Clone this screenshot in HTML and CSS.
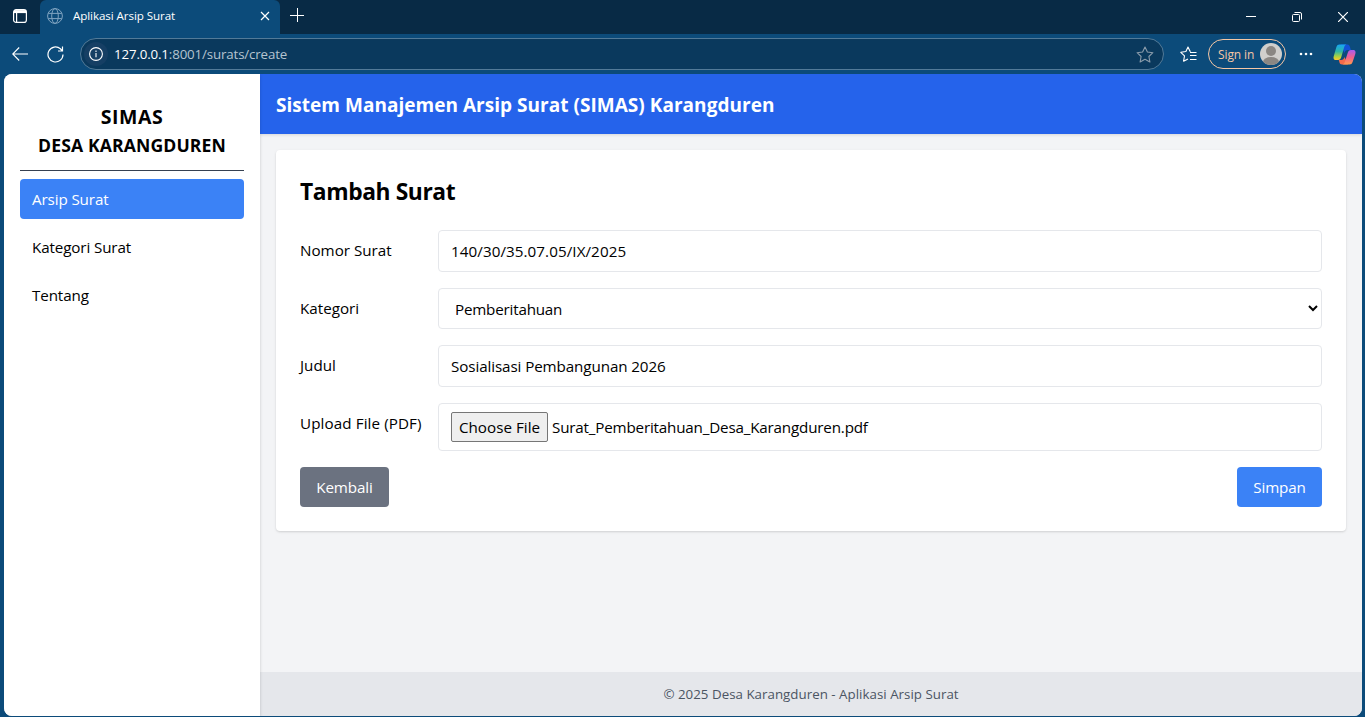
FILE: index.html
```html
<!DOCTYPE html>
<html lang="id">
<head>
<meta charset="utf-8">
<title>Aplikasi Arsip Surat</title>
<link rel="stylesheet" href="styles.css">
</head>
<body>
<div class="browser">
  <div class="tabstrip">
    <div class="tab-menu">
      <svg width="16" height="16" viewBox="0 0 16 16" fill="none" stroke="#fff" stroke-width="1.2"><rect x="1.6" y="1.6" width="12.8" height="12.8" rx="2.5"/><path d="M2 3.6h12" stroke-width="3"/><path d="M4.6 4v10"/></svg>
    </div>
    <div class="tab">
      <svg class="globe" width="16" height="16" viewBox="0 0 16 16" fill="none" stroke="#7fa3c0" stroke-width="1"><circle cx="8" cy="8" r="7.4"/><ellipse cx="8" cy="8" rx="3.3" ry="7.4"/><path d="M1.2 5.4h13.6M1.2 10.6h13.6"/></svg>
      <span class="tab-title">Aplikasi Arsip Surat</span>
      <svg class="tab-close" width="10" height="10" viewBox="0 0 10 10" stroke="#fff" stroke-width="1.2"><path d="M1 1l8 8M9 1l-8 8"/></svg>
    </div>
    <svg class="new-tab" width="14" height="14" viewBox="0 0 14 14" stroke="#fff" stroke-width="1"><path d="M7.5 0v14M0 7.5h14"/></svg>
    <div class="window-controls">
      <svg width="10" height="10" viewBox="0 0 10 10" stroke="#fff"><path d="M0 4.5h10"/></svg>
      <svg width="10" height="10" viewBox="0 0 10 10" fill="none" stroke="#fff"><rect x=".5" y="2.5" width="7" height="7" rx="1"/><path d="M2.5.5H8A1.5 1.5 0 0 1 9.5 2v5.5"/></svg>
      <svg width="10" height="10" viewBox="0 0 10 10" stroke="#fff" stroke-width="1.2"><path d="M0 0l10 10M10 0L0 10"/></svg>
    </div>
  </div>
  <div class="toolbar">
    <svg class="back" width="16" height="14" viewBox="0 0 16 14" fill="none" stroke="#fff" stroke-width="1.1"><path d="M16 7H.8M7.2.5L.7 7l6.5 6.5"/></svg>
    <svg class="reload" width="17" height="17" viewBox="0 0 17 17" fill="none" stroke="#fff" stroke-width="1.2"><path d="M16 8.5a7.500 7.500 0 1 1-2.600-5.700L15.500 5M15.500.5V5H11"/></svg>
    <div class="address">
      <div class="site-info"><svg width="14" height="14" viewBox="0 0 14 14" fill="none" stroke="#fff" stroke-width="1.1"><circle cx="7" cy="7" r="6.4"/><path d="M7 6v4.2M7 3.6v1.3"/></svg></div>
      <span class="url"><b>127.0.0.1</b>:8001/surats/create</span>
      <svg class="star" width="18" height="17" viewBox="0 0 18 17" fill="none" stroke="#8b9cab" stroke-width="1.1" stroke-linejoin="round"><path d="M9 1l2.4 5 5.500.7-4 3.800 1 5.500L9 13.300 4.100 16l1-5.500-4-3.800L6.600 6z"/></svg>
    </div>
    <svg class="favorites" width="17" height="17" viewBox="0 0 17 17" fill="none" stroke="#fff" stroke-width="1.1" stroke-linejoin="round"><path d="M10.800 5.200L10 5.200 8 1 5.900 5.500.8 6.300l3.700 3.600-.9 5.300L8 12.900M10 6.500h6.500M10 9.500h6.500M10 13.500h6.500"/></svg>
    <div class="sign-in">
      <span>Sign in</span>
      <svg width="22" height="22" viewBox="0 0 22 22"><defs><clipPath id="face"><circle cx="11" cy="11" r="11"/></clipPath></defs><g clip-path="url(#face)"><rect width="22" height="22" fill="#d1cfcc"/><circle cx="11" cy="8" r="5" fill="#8b8783"/><ellipse cx="11" cy="19" rx="8" ry="5" fill="#8b8783"/></g></svg>
    </div>
    <svg class="more" width="14" height="4" viewBox="0 0 14 4" fill="#fff"><circle cx="2" cy="2" r="1.300"/><circle cx="7" cy="2" r="1.300"/><circle cx="12" cy="2" r="1.300"/></svg>
    <svg class="copilot" width="23" height="21" viewBox="0 0 23 21">
      <defs>
        <linearGradient id="cool" x1="0" y1="0" x2="0" y2="1"><stop offset="0" stop-color="#16a4f5"/><stop offset=".45" stop-color="#2fb6a4"/><stop offset=".8" stop-color="#b4d33a"/><stop offset="1" stop-color="#ffc52e"/></linearGradient>
        <linearGradient id="warm" x1="0" y1="0" x2="0" y2="1"><stop offset="0" stop-color="#a75cf0"/><stop offset=".5" stop-color="#f0608e"/><stop offset="1" stop-color="#ff9a4c"/></linearGradient>
      </defs>
      <path d="M8 .5h6.500c1.500 0 2 1 2.400 2.300l1 3.200h-3c-2 0-3 1-3.500 3z" fill="#1251d6"/>
      <path d="M15 20.500H9c-1.500 0-2.200-1-2.600-2.300L5.800 16H8c2 0 3-1 3.500-3z" fill="#f26a4b"/>
      <path d="M6.500.5h7c-1.500.4-2 1.500-2.500 3.300L8.300 13c-.5 1.900-1.500 3-3.300 3H3C.5 16 .2 14 .8 12L3.400 3C4 1.300 4.900.5 6.500.5z" fill="url(#cool)"/>
      <path d="M16.500 20.500h-7c1.500-.4 2-1.500 2.500-3.300L14.700 9c.5-1.900 1.500-3 3.300-3h2c2.500 0 2.900 2 2.300 4l-2.700 8c-.6 1.700-1.500 2.500-3.100 2.500z" fill="url(#warm)"/>
    </svg>
  </div>
  <div class="page">
    <aside class="sidebar">
      <div class="brand"><div class="brand-name">SIMAS</div><div class="brand-village">DESA KARANGDUREN</div></div>
      <nav class="menu">
        <a class="menu-item active">Arsip Surat</a>
        <a class="menu-item">Kategori Surat</a>
        <a class="menu-item">Tentang</a>
      </nav>
    </aside>
    <div class="content">
      <header class="topbar"><span>Sistem Manajemen Arsip Surat (SIMAS) Karangduren</span></header>
      <main class="main">
        <form class="card">
          <h1 class="title">Tambah Surat</h1>
          <div class="row"><label class="label">Nomor Surat</label><input class="field number" type="text" value="140/30/35.07.05/IX/2025"></div>
          <div class="row"><label class="label">Kategori</label><select class="field select"><option>Pemberitahuan</option></select></div>
          <div class="row"><label class="label">Judul</label><input class="field" type="text" value="Sosialisasi Pembangunan 2026"></div>
          <div class="row"><label class="label upload">Upload File (PDF)</label><div class="field file"><button type="button" class="choose">Choose File</button><span class="filename">Surat_Pemberitahuan_Desa_Karangduren.pdf</span></div></div>
          <div class="actions"><a class="btn back-btn">Kembali</a><button type="button" class="btn save-btn">Simpan</button></div>
        </form>
      </main>
      <footer class="footer"><span>© 2025 Desa Karangduren - Aplikasi Arsip Surat</span></footer>
    </div>
  </div>
</div>
</body>
</html>
```
FILE: styles.css
```css
* { box-sizing: border-box; }
body { margin: 0; font-family: "Open Sans", "Noto Sans", sans-serif; font-size: 15.2px; letter-spacing: -0.12px; color: #000; overflow: hidden; }
svg { display: block; flex: none; }
.browser { width: 1365px; height: 717px; background: #0c4b7a; display: flex; flex-direction: column; }

.tabstrip { height: 34px; flex: none; display: flex; background: #082a45; }
.tab-menu { width: 40px; display: flex; align-items: center; justify-content: center; padding-bottom: 2px; }
.tab { width: 240px; display: flex; align-items: center; background: #0c4b7a; border-radius: 6px 6px 0 0; padding: 0 10px 2px 7px; color: #fff; }
.tab-title { flex: 1; margin: -1px 0 0 10px; font-size: 11.6px; letter-spacing: -0.08px; }
.new-tab { margin: 8px 0 0 10px; }
.window-controls { margin-left: auto; display: flex; gap: 36px; padding: 12px 17px 0 0; }

.toolbar { height: 40px; flex: none; display: flex; align-items: center; padding: 0 9px 0 12px; }
.reload { margin-left: 19px; }
.address { width: 1084px; height: 32px; flex: none; margin-left: 16px; display: flex; align-items: center; border: 1px solid #527a98; border-radius: 16px; background: #0a395d; padding: 0 9px 0 3px; }
.site-info { width: 24px; height: 24px; border-radius: 50%; background: #163f64; display: flex; align-items: center; justify-content: center; }
.url { flex: 1; margin-left: 6px; font-size: 13.3px; letter-spacing: -0.14px; color: #b5c4d0; }
.url b { font-weight: 400; color: #fff; }
.favorites { margin-left: 16px; }
.sign-in { width: 78px; height: 30px; flex: none; margin-left: 11px; display: flex; align-items: center; justify-content: space-between; border: 1px solid #f5c7a5; border-radius: 15px; padding: 0 3px 0 9px; color: #f5c7a5; font-size: 12px; letter-spacing: -0.1px; }
.more { margin-left: 13px; }
.copilot { margin-left: 20px; }

.page { width: 1358px; height: 642px; margin-left: 4px; display: flex; overflow: hidden; border-radius: 8px; background: #f3f4f6; }
.sidebar { width: 256px; flex: none; background: #fff; padding: 28px 16px; box-shadow: 0 1px 3px rgba(0,0,0,.18); z-index: 1; }
.brand { height: 69px; border-bottom: 1px solid #374151; text-align: center; font-weight: 700; }
.brand-name { font-size: 19.5px; line-height: 30px; letter-spacing: 0.5px; }
.brand-village { font-size: 17.6px; line-height: 26px; letter-spacing: 0.12px; }
.menu { display: flex; flex-direction: column; gap: 8px; padding-top: 8px; }
.menu-item { height: 40px; line-height: 40px; padding: 0 12px; border-radius: 4px; }
.menu-item.active { background: #3b82f6; color: #fff; }

.content { flex: 1; display: flex; flex-direction: column; }
.topbar { height: 60px; padding: 0 16px; line-height: 62px; background: #2563eb; color: #fff; font-size: 19px; font-weight: 700; letter-spacing: 0.03px; box-shadow: 0 1px 3px rgba(0,0,0,.12); }
.main { flex: 1; padding: 16px; }
.card { height: 381px; margin: 0; padding: 24px; background: #fff; border-radius: 4px; box-shadow: 0 1px 3px rgba(0,0,0,.1), 0 1px 2px rgba(0,0,0,.06); }
.title { margin: 0 0 24px; font-size: 22.8px; line-height: 35px; height: 32px; font-weight: 700; letter-spacing: -0.4px; }
.row { display: flex; align-items: flex-start; margin-bottom: 16px; }
.label { width: 138px; padding-top: 8px; line-height: 25px; height: 33px; letter-spacing: 0; }
.upload { letter-spacing: 0.1px; }
.field { flex: 1; min-width: 0; height: 42px; border: 1px solid #e5e7eb; border-radius: 4px; background: #fff; padding: 8px 12px; font: inherit; letter-spacing: -0.1px; color: #000; outline: 0; }
.number { letter-spacing: 0.07px; }
.select { height: 41px; padding-right: 0; letter-spacing: -0.2px; }
.file { height: 48px; display: flex; align-items: center; letter-spacing: -0.18px; }
.choose { width: 97px; height: 30px; margin-right: 4px; padding: 0; border: 1px solid #767676; border-radius: 2px; background: #efefef; font: inherit; letter-spacing: 0.02px; }
.actions { display: flex; justify-content: space-between; }
.btn { height: 40px; line-height: 41px; padding: 0; border: 0; border-radius: 4px; color: #fff; font-family: inherit; font-size: inherit; letter-spacing: inherit; text-align: center; }
.back-btn { width: 89px; background: #6b7280; }
.save-btn { width: 85px; background: #3b82f6; }
.footer { height: 44px; line-height: 44px; text-align: center; background: #e5e7eb; color: #4b5563; font-size: 13.3px; letter-spacing: 0.03px; }
```
